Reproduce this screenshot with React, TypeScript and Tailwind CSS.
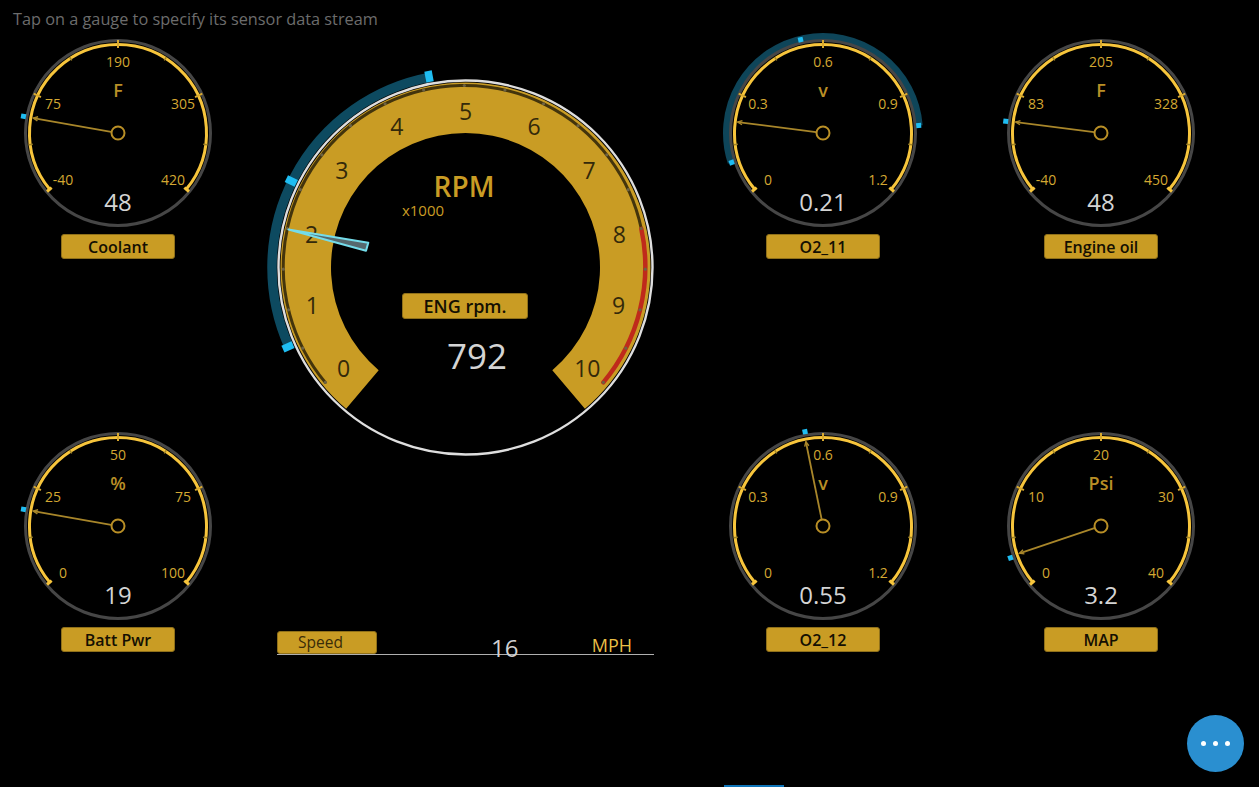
const polar = (cx: number, cy: number, r: number, deg: number) => {
  const a = (deg * Math.PI) / 180
  return { x: cx + r * Math.sin(a), y: cy - r * Math.cos(a) }
}

const arc = (cx: number, cy: number, r: number, from: number, to: number) => {
  const a = polar(cx, cy, r, from)
  const b = polar(cx, cy, r, to)
  return `M${a.x} ${a.y}A${r} ${r} 0 ${to - from > 180 ? 1 : 0} 1 ${b.x} ${b.y}`
}

const sector = (cx: number, cy: number, r1: number, r2: number, from: number, to: number) => {
  const a = polar(cx, cy, r1, from)
  const b = polar(cx, cy, r1, to)
  const c = polar(cx, cy, r2, to)
  const d = polar(cx, cy, r2, from)
  return `M${a.x} ${a.y}A${r1} ${r1} 0 1 1 ${b.x} ${b.y}L${c.x} ${c.y}A${r2} ${r2} 0 1 0 ${d.x} ${d.y}Z`
}

function Label({ text, className }: { text: string; className: string }) {
  return (
    <div className={`flex items-center justify-center rounded-[3px] border border-[#8f701a] bg-[#c99c24] font-semibold text-[#140f02] ${className}`}>
      {text}
    </div>
  )
}

type GaugeProps = {
  name: string
  unit: string
  scale: string[]
  value: string
  needle: number
  markers: number[]
  range?: [number, number]
}

function Gauge({ name, unit, scale, value, needle, markers, range }: GaugeProps) {
  const c = 100
  const tip = polar(c, c, 86, needle)
  const hub = polar(c, c, 7, needle)
  const barbA = polar(tip.x, tip.y, 5, needle + 155)
  const barbB = polar(tip.x, tip.y, 5, needle - 155)
  const spots = [
    [-55, 46],
    [-65, -30],
    [0, -72],
    [65, -30],
    [55, 46],
  ]
  const ticks = [-97.5, -32.5, 32.5, 97.5]
  const majors = [-65, 0, 65]

  return (
    <div className="flex w-[200px] flex-col items-center">
      <svg viewBox="0 0 200 200" className="h-[200px] w-[200px] overflow-visible">
        {range && <path d={arc(c, c, 96.5, range[0], range[1])} fill="none" stroke="#0e4559" strokeWidth="7" />}
        <circle cx={c} cy={c} r="92.5" fill="none" stroke="#464646" strokeWidth="3" />
        <path d={arc(c, c, 88.5, -129.5, 129.5)} fill="none" stroke="#f7c53c" strokeWidth="3" />
        {[-129.5, 129.5].map((d) => {
          const a = polar(c, c, 86, d)
          const b = polar(c, c, 92, d)
          return <line key={d} x1={a.x} y1={a.y} x2={b.x} y2={b.y} stroke="#f7c53c" strokeWidth="3" />
        })}
        {majors.map((d) => {
          const a = polar(c, c, 85, d)
          const b = polar(c, c, 93, d)
          return <line key={d} x1={a.x} y1={a.y} x2={b.x} y2={b.y} stroke="#d8a92f" strokeWidth="2" />
        })}
        {ticks.map((d) => {
          const a = polar(c, c, 86, d)
          const b = polar(c, c, 90, d)
          return <line key={d} x1={a.x} y1={a.y} x2={b.x} y2={b.y} stroke="#a08428" strokeWidth="1.5" />
        })}
        {markers.map((d) => {
          const a = polar(c, c, 93.5, d)
          const b = polar(c, c, 98.5, d)
          return <line key={d} x1={a.x} y1={a.y} x2={b.x} y2={b.y} stroke="#1fbdf2" strokeWidth="5" />
        })}
        {scale.map((s, i) => (
          <text key={i} x={c + spots[i][0]} y={c + spots[i][1]} textAnchor="middle" dominantBaseline="central" className="fill-[#d4a832] text-[14px]">
            {s}
          </text>
        ))}
        <text x={c} y={c - 43} textAnchor="middle" dominantBaseline="central" className="fill-[#b98f26] text-[18px] font-semibold">
          {unit}
        </text>
        <text x={c} y={c + 68} textAnchor="middle" dominantBaseline="central" className="fill-[#d4d4d4] text-[24px]">
          {value}
        </text>
        <line x1={hub.x} y1={hub.y} x2={tip.x} y2={tip.y} stroke="#a8862a" strokeWidth="1.8" />
        <path d={`M${barbA.x} ${barbA.y}L${tip.x} ${tip.y}L${barbB.x} ${barbB.y}`} fill="none" stroke="#a8862a" strokeWidth="1.4" />
        <circle cx={c} cy={c} r="6.5" fill="none" stroke="#b98f26" strokeWidth="2" />
      </svg>
      <Label text={name} className="mt-[1px] h-[25px] w-[114px] text-[16px]" />
    </div>
  )
}

function MainGauge() {
  const c = 209.5
  // the inner scale ring sits slightly off the bezel's centre
  const sx = 208.3
  const sy = 208.5
  const span = 129.8
  const digits = Array.from({ length: 11 }, (_, i) => i)
  const ticks = Array.from({ length: 21 }, (_, i) => -span + (i * span) / 10)

  return (
    <div className="relative h-[420px] w-[420px]">
      <svg viewBox="0 0 420 420" className="h-[420px] w-[420px]">
        <path d={arc(c, c, 193.5, -114, -10.8)} fill="none" stroke="#0d4a60" strokeWidth="9.5" />
        {[-114.1, -63.6, -10.8].map((d) => {
          const a = polar(c, c, 189, d)
          const b = polar(c, c, 200, d)
          return <line key={d} x1={a.x} y1={a.y} x2={b.x} y2={b.y} stroke="#1fbdf2" strokeWidth="7.5" />
        })}
        <path d={sector(c, c, 185, 134.5, -139.8, 139.8)} fill="#c99c24" />
        <circle cx={c} cy={c} r="187" fill="none" stroke="#dedede" strokeWidth="2.4" />
        <path d={arc(sx, sy, 181, -span, 78)} fill="none" stroke="#43340c" strokeWidth="3" strokeLinecap="round" />
        <path d={arc(sx, sy, 181, 78, span)} fill="none" stroke="#bf2a1b" strokeWidth="4.5" strokeLinecap="round" />
        {ticks.map((d) => {
          const p = polar(sx, sy, 181, d)
          return <circle key={d} cx={p.x} cy={p.y} r="1.6" fill="#6d6243" />
        })}
        {digits.map((n) => {
          const p = polar(c, c + 0.5, 157.5, -129.3 + (n * 129.3) / 5)
          return (
            <text key={n} x={p.x} y={p.y} textAnchor="middle" dominantBaseline="central" className="fill-[#33290a] text-[23px]">
              {n}
            </text>
          )
        })}
        <text x="208" y="128" textAnchor="middle" dominantBaseline="central" className="fill-[#c99c24] text-[28px] font-semibold">
          RPM
        </text>
        <text x="167" y="152" textAnchor="middle" dominantBaseline="central" className="fill-[#c99c24] text-[15px]">
          x1000
        </text>
        <text x="221" y="297" textAnchor="middle" dominantBaseline="central" className="fill-[#d4d4d4] text-[35px]">
          792
        </text>
        <polygon points="32.5,171.5 112.3,184.7 110,192.7" fill="#56696e" stroke="#74dcea" strokeWidth="2" strokeLinejoin="round" />
      </svg>
      <Label text="ENG rpm." className="absolute left-[146px] top-[235px] h-[26px] w-[126px] text-[18px]" />
    </div>
  )
}

export default function App() {
  return (
    <div className="relative h-screen w-screen overflow-hidden bg-black font-['Open_Sans',sans-serif]">
      <p className="h-[33px] pl-[13px] pt-[8px] text-[16.3px] leading-[22px] text-[#6c6c6c]">
        Tap on a gauge to specify its sensor data stream
      </p>
      <div className="flex pl-[18px]">
        <div className="flex w-[200px] flex-col gap-[167px]">
          <Gauge name="Coolant" unit="F" scale={['-40', '75', '190', '305', '420']} value="48" needle={-80} markers={[-80]} />
          <Gauge name="Batt Pwr" unit="%" scale={['0', '25', '50', '75', '100']} value="19" needle={-80} markers={[-80]} />
        </div>
        <div className="w-[505px] pl-[38px] pt-[25px]">
          <MainGauge />
          <div className="ml-[21px] mt-[153px] flex h-[24px] w-[377px] items-start border-b border-[#b0b0b0]">
            <Label text="Speed" className="h-[23px] w-[100px] pr-[13px] text-[15.5px] !font-normal !text-[#3a2c08]" />
            <span className="ml-[114px] mt-[1px] text-[24px] leading-[32px] text-[#d0d0d0]">16</span>
            <span className="ml-auto mr-[22px] mt-[2px] text-[18px] leading-[24px] text-[#eabf45]">MPH</span>
          </div>
        </div>
        <div className="flex w-[200px] flex-col gap-[167px]">
          <Gauge name="O2_11" unit="v" scale={['0', '0.3', '0.6', '0.9', '1.2']} value="0.21" needle={-82.7} markers={[-107.9, -13.5, 85.5]} range={[-107.9, 85.5]} />
          <Gauge name="O2_12" unit="v" scale={['0', '0.3', '0.6', '0.9', '1.2']} value="0.55" needle={-11.5} markers={[-10.8]} />
        </div>
        <div className="ml-[78px] flex w-[200px] flex-col gap-[167px]">
          <Gauge name="Engine oil" unit="F" scale={['-40', '83', '205', '328', '450']} value="48" needle={-82.7} markers={[-83]} />
          <Gauge name="MAP" unit="Psi" scale={['0', '10', '20', '30', '40']} value="3.2" needle={-108.5} markers={[-109.4]} />
        </div>
      </div>
      <button className="absolute left-[1187px] top-[715px] flex h-[57px] w-[57px] items-center justify-center gap-[7px] rounded-full bg-[#2a8fd0]">
        <span className="h-[5px] w-[5px] rounded-full bg-white" />
        <span className="h-[5px] w-[5px] rounded-full bg-white" />
        <span className="h-[5px] w-[5px] rounded-full bg-white" />
      </button>
      <div className="absolute bottom-0 left-[724px] h-[2px] w-[60px] bg-[#0e74b8]" />
    </div>
  )
}
